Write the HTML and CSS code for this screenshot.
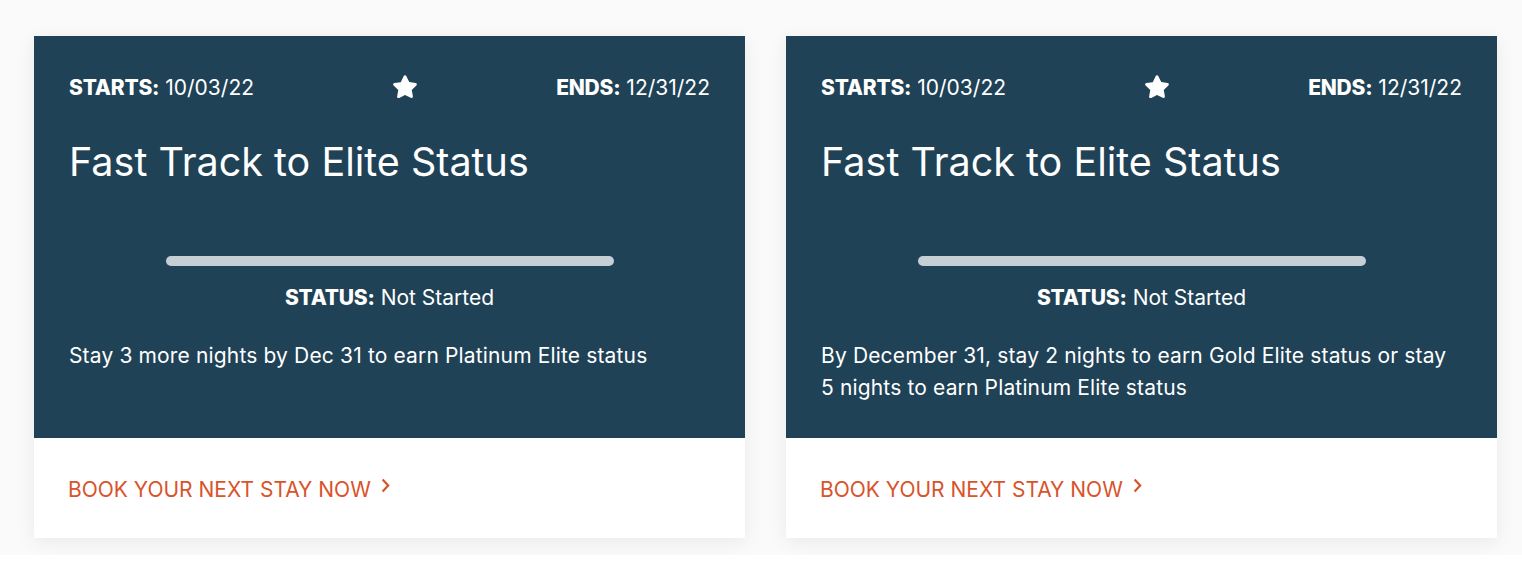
FILE: index.html
```html
<!DOCTYPE html>
<html lang="en">
<head>
  <meta charset="UTF-8">
  <meta name="viewport" content="width=device-width, initial-scale=1.0">
  <title>Promotions</title>
  <link rel="stylesheet" href="styles.css">
</head>
<body>
  <div class="promo-list">

    <div class="promo-card">
      <div class="promo-body">
        <div class="promo-dates">
          <span><b>STARTS:</b> 10/03/22</span>
          <svg class="star" viewBox="0 0 24 24" width="30" height="30">
            <path d="M12 2.6c.5 0 .9.3 1.1.7l2.3 4.7 5.1.7c1 .1 1.3 1.3.6 2l-3.7 3.6.9 5.1c.2 1-.8 1.7-1.7 1.2L12 18.3l-4.6 2.4c-.9.5-1.9-.3-1.7-1.2l.9-5.1-3.7-3.6c-.7-.7-.3-1.9.6-2l5.1-.7 2.3-4.7c.2-.5.6-.8 1.1-.8z" fill="#fff"/>
          </svg>
          <span><b>ENDS:</b> 12/31/22</span>
        </div>
        <h2 class="promo-title">Fast Track to Elite Status</h2>
        <div class="progress"><div class="progress-fill" style="width: 0%"></div></div>
        <p class="promo-status"><b>STATUS:</b> Not Started</p>
        <p class="promo-desc">Stay 3 more nights by Dec 31 to earn Platinum Elite status</p>
      </div>
      <div class="promo-foot">
        <a href="#" class="book-link">BOOK YOUR NEXT STAY NOW
          <svg class="chev" viewBox="0 0 9 15" width="9" height="15"><path d="M1.6 1.5l5.6 6-5.6 6" fill="none" stroke="#d9532b" stroke-width="2.2"/></svg>
        </a>
      </div>
    </div>

    <div class="promo-card">
      <div class="promo-body">
        <div class="promo-dates">
          <span><b>STARTS:</b> 10/03/22</span>
          <svg class="star" viewBox="0 0 24 24" width="30" height="30">
            <path d="M12 2.6c.5 0 .9.3 1.1.7l2.3 4.7 5.1.7c1 .1 1.3 1.3.6 2l-3.7 3.6.9 5.1c.2 1-.8 1.7-1.7 1.2L12 18.3l-4.6 2.4c-.9.5-1.9-.3-1.7-1.2l.9-5.1-3.7-3.6c-.7-.7-.3-1.9.6-2l5.1-.7 2.3-4.7c.2-.5.6-.8 1.1-.8z" fill="#fff"/>
          </svg>
          <span><b>ENDS:</b> 12/31/22</span>
        </div>
        <h2 class="promo-title">Fast Track to Elite Status</h2>
        <div class="progress"><div class="progress-fill" style="width: 0%"></div></div>
        <p class="promo-status"><b>STATUS:</b> Not Started</p>
        <p class="promo-desc">By December 31, stay 2 nights to earn Gold Elite status or stay 5 nights to earn Platinum Elite status</p>
      </div>
      <div class="promo-foot">
        <a href="#" class="book-link">BOOK YOUR NEXT STAY NOW
          <svg class="chev" viewBox="0 0 9 15" width="9" height="15"><path d="M1.6 1.5l5.6 6-5.6 6" fill="none" stroke="#d9532b" stroke-width="2.2"/></svg>
        </a>
      </div>
    </div>

  </div>
</body>
</html>
```

FILE: styles.css
```css
body {
  margin: 0;
  background-color: #fff;
  font-family: Inter, "Noto Sans", Arial, sans-serif;
  color: #fff;
}
.promo-list {
  display: grid;
  grid-template-columns: 711px 711px;
  gap: 41px;
  padding: 36px 25px 17px 34px;
  background-color: #fafafa;
}
.promo-card {
  display: flex;
  flex-direction: column;
  background-color: #fff;
  box-shadow: 0 4px 18px rgba(0,0,0,0.07);
}
.promo-body {
  flex: 1;
  background-color: #1f4257;
  padding: 38px 35px 34px 35px;
}
.promo-dates {
  display: flex;
  justify-content: space-between;
  align-items: center;
  font-size: 21px;
  line-height: 28px;
}
.promo-dates b {
  font-weight: 800;
  letter-spacing: -0.2px;
}
.star {
  display: block;
  margin-top: -2px;
}
.promo-title {
  margin: 36px 0 0 0;
  font-size: 39.5px;
  font-weight: 400;
  line-height: 48px;
}
.progress {
  width: 448px;
  height: 10px;
  margin: 70px auto 0 auto;
  border-radius: 5px;
  background-color: #c6cfd6;
  overflow: hidden;
}
.progress-fill {
  height: 100%;
  background-color: #d9532b;
}
.promo-status {
  margin: 18px 0 0 0;
  text-align: center;
  font-size: 21px;
  line-height: 28px;
}
.promo-status b {
  font-weight: 800;
  letter-spacing: -0.2px;
}
.promo-desc {
  margin: 28px 0 0 0;
  font-size: 21px;
  line-height: 32px;
  letter-spacing: 0.15px;
}
.promo-foot {
  height: 100px;
  padding: 38px 35px 0 34px;
  box-sizing: border-box;
}
.book-link {
  display: inline-flex;
  align-items: center;
  color: #d9532b;
  text-decoration: none;
  font-size: 21px;
  line-height: 28px;
}
.chev {
  display: block;
  margin: -9px 0 0 10px;
}
```
